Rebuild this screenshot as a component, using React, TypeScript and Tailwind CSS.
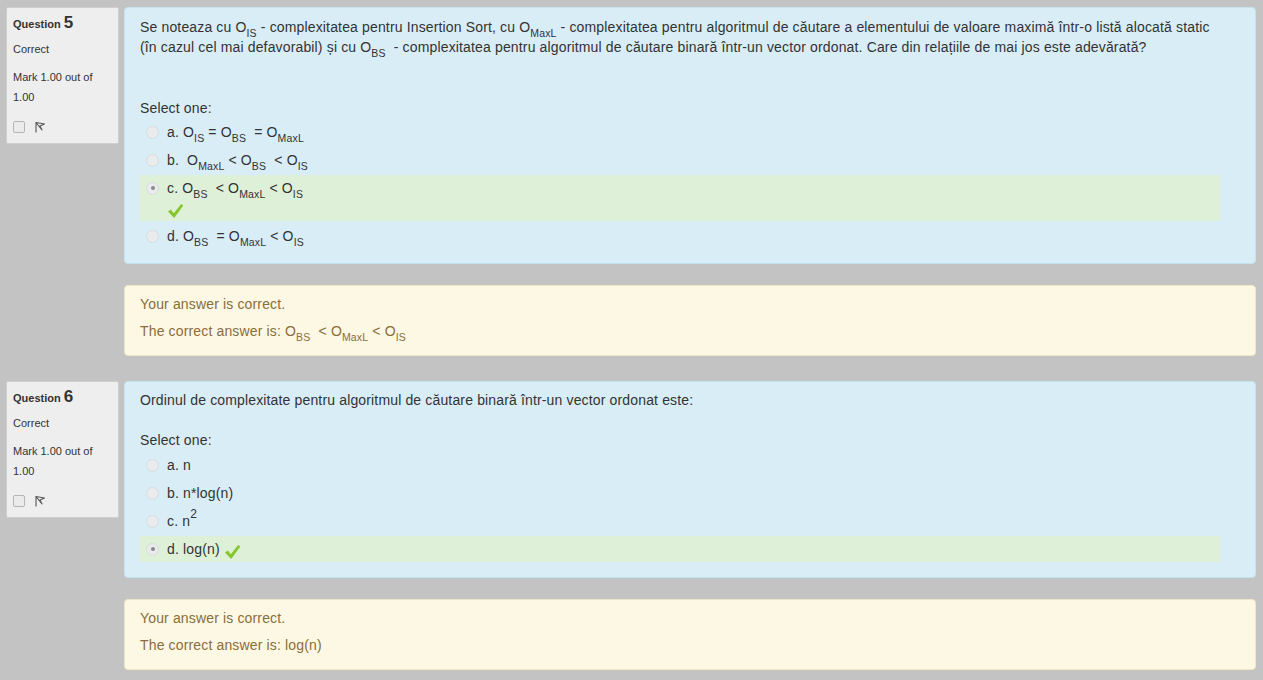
import React from "react";

const O = ({ s }: { s: string }) => (
  <>
    O<sub className="bottom-[-5px] text-[10.5px]">{s}</sub>
  </>
);

const Check = () => (
  <svg width="17" height="16" viewBox="0 0 17 16" className="inline-block">
    <path
      d="M1 8.5 L3.8 6.5 L6.8 10.2 L14.2 1 L16.3 2.6 L7.2 15 Z"
      fill="#86c52b"
    />
  </svg>
);

const Radio = ({ checked }: { checked?: boolean }) => (
  <span className="mt-[3.5px] flex h-[13px] w-[13px] shrink-0 items-center justify-center rounded-full border border-[#d8dcdf] bg-[#e9ebec]">
    {checked && <span className="h-[4px] w-[4px] rounded-full bg-[#8a8a8a]" />}
  </span>
);

const Flag = () => (
  <svg width="12" height="12" viewBox="0 0 12 12">
    <path
      d="M2 1 L2 11.5 M2 1.5 L10.5 3 L6 5 L8 9 Z"
      fill="none"
      stroke="#555"
      strokeWidth="1.1"
      strokeLinejoin="round"
    />
  </svg>
);

interface OptionProps {
  label: string;
  checked?: boolean;
  correct?: boolean;
  checkBelow?: boolean;
  children: React.ReactNode;
}

const Option = ({ label, checked, correct, checkBelow, children }: OptionProps) => (
  <div
    className={
      "mb-[2px] flex gap-[8px] py-[3px] pl-[6px] " +
      (correct ? "bg-[#dff0d8]" : "")
    }
  >
    <Radio checked={checked} />
    <div className="leading-[20px]">
      <div className="h-[20px]">
        {label}. {children}
        {correct && !checkBelow && (
          <span className="ml-[4px] inline-block h-[14px] align-[-2px]">
            <Check />
          </span>
        )}
      </div>
      {correct && checkBelow && (
        <div className="h-[20px] pt-[2px]">
          <Check />
        </div>
      )}
    </div>
  </div>
);

const Info = ({ n }: { n: number }) => (
  <div className="h-[137px] w-[113px] shrink-0 rounded-[2px] border border-[#cfcfcf] bg-[#eeeeee] px-[6px] pt-[5px] text-[11px] text-[#333]">
    <div className="leading-[20px]">
      <span className="font-bold">Question </span>
      <span className="text-[17px] font-bold">{n}</span>
    </div>
    <div className="mt-[5px] leading-[20px]">Correct</div>
    <div className="mt-[8px] leading-[20px]">
      Mark 1.00 out of
      <br />
      1.00
    </div>
    <div className="mt-[14px] flex items-center gap-[9px]">
      <span className="h-[12px] w-[12px] rounded-[2px] border border-[#b5b5b5] bg-[#ebebeb]" />
      <Flag />
    </div>
  </div>
);

const Feedback = ({ children }: { children: React.ReactNode }) => (
  <div className="mt-[21px] rounded-[4px] border border-[#f1e6c4] bg-[#fcf8e3] px-[15px] pb-[14px] pt-[8px] text-[14px] leading-[20px] tracking-[0.15px] text-[#8a6d3b]">
    <div>Your answer is correct.</div>
    <div className="mt-[7px] h-[20px]">The correct answer is: {children}</div>
  </div>
);

export default function App() {
  return (
    <div
      className="min-h-screen bg-[#c3c3c3] pl-[6px] pr-[7px] pt-[7px] text-[#333]"
      style={{ fontFamily: '"Liberation Sans", Arial, sans-serif' }}
    >
      {/* Question 5 */}
      <div className="flex gap-[5px]">
        <Info n={5} />
        <div className="flex-1">
          <div className="rounded-[4px] border border-[#c2e4ee] bg-[#d9edf7] pb-[12px] pl-[15px] pr-[35px] pt-[9px] text-[14px] leading-[20px] tracking-[0.15px]">
            <div>
              Se noteaza cu <O s="IS" /> - complexitatea pentru Insertion Sort, cu <O s="MaxL" /> - complexitatea pentru algoritmul de căutare a elementului de valoare maximă într-o listă alocată static
              <br />
              (în cazul cel mai defavorabil) și cu <O s="BS" />
              {"\u00a0 "}- complexitatea pentru algoritmul de căutare binară într-un vector ordonat. Care din relațiile de mai jos este adevărată?
            </div>
            <div className="mt-[41px]">Select one:</div>
            <div className="mt-[1px]">
              <Option label="a">
                <O s="IS" /> = <O s="BS" />
                {"\u00a0 "}= <O s="MaxL" />
              </Option>
              <Option label="b">
                {"\u00a0"}
                <O s="MaxL" /> &lt; <O s="BS" />
                {"\u00a0 "}&lt; <O s="IS" />
              </Option>
              <Option label="c" checked correct checkBelow>
                <O s="BS" />
                {"\u00a0 "}&lt; <O s="MaxL" /> &lt; <O s="IS" />
              </Option>
              <Option label="d">
                <O s="BS" />
                {"\u00a0 "}= <O s="MaxL" /> &lt; <O s="IS" />
              </Option>
            </div>
          </div>
          <Feedback>
            <O s="BS" />
            {"\u00a0 "}&lt; <O s="MaxL" /> &lt; <O s="IS" />
          </Feedback>
        </div>
      </div>

      {/* Question 6 */}
      <div className="mt-[25px] flex gap-[5px]">
        <Info n={6} />
        <div className="flex-1">
          <div className="rounded-[4px] border border-[#c2e4ee] bg-[#d9edf7] pb-[13px] pl-[15px] pr-[35px] pt-[8px] text-[14px] leading-[20px] tracking-[0.15px]">
            <div>
              Ordinul de complexitate pentru algoritmul de căutare binară într-un vector ordonat este:
            </div>
            <div className="mt-[20px]">Select one:</div>
            <div className="mt-[2px]">
              <Option label="a">n</Option>
              <Option label="b">n*log(n)</Option>
              <Option label="c">
                n<sup className="top-[-8px] text-[12px]">2</sup>
              </Option>
              <Option label="d" checked correct>
                log(n)
              </Option>
            </div>
          </div>
          <Feedback>log(n)</Feedback>
        </div>
      </div>
      <div className="h-[12px]" />
    </div>
  );
}
